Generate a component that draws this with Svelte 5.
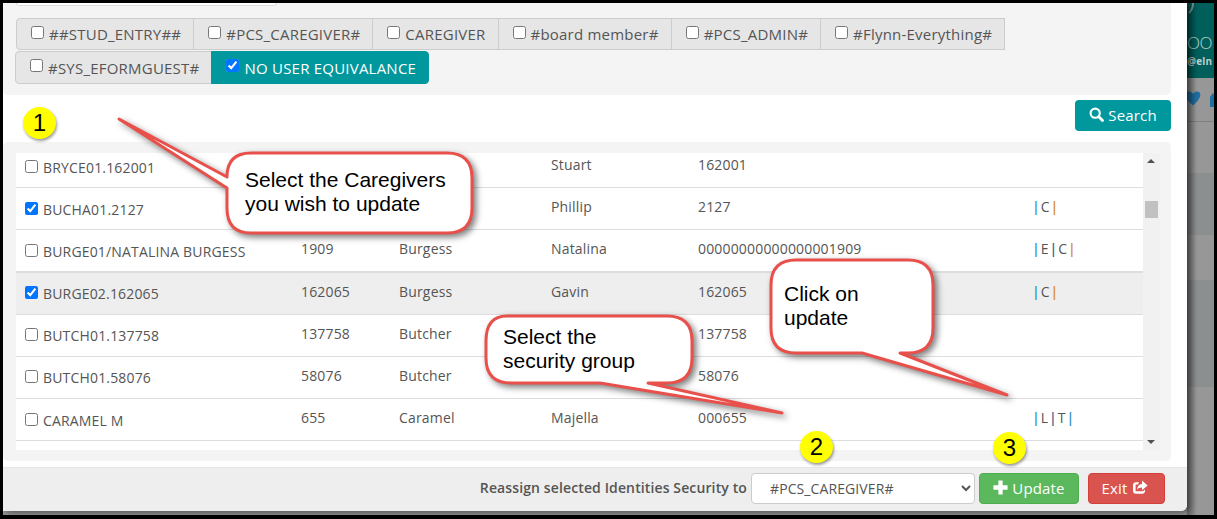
<script>
  const tabsA = [
    { label: '##STUD_ENTRY##' },
    { label: '#PCS_CAREGIVER#' },
    { label: 'CAREGIVER' },
    { label: '#board member#' },
    { label: '#PCS_ADMIN#' },
    { label: '#Flynn-Everything#' }
  ];
  const rows = [
    { id: 'BRYCE01.162001', no: '', last: '', first: 'Stuart', code: '162001', flags: [] },
    { id: 'BUCHA01.2127', no: '', last: '', first: 'Phillip', code: '2127', flags: ['C'], on: true },
    { id: 'BURGE01/NATALINA BURGESS', no: '1909', last: 'Burgess', first: 'Natalina', code: '00000000000000001909', flags: ['E', 'C'] },
    { id: 'BURGE02.162065', no: '162065', last: 'Burgess', first: 'Gavin', code: '162065', flags: ['C'], on: true, hover: true },
    { id: 'BUTCH01.137758', no: '137758', last: 'Butcher', first: '', code: '137758', flags: [] },
    { id: 'BUTCH01.58076', no: '58076', last: 'Butcher', first: '', code: '58076', flags: [] },
    { id: 'CARAMEL M', no: '655', last: 'Caramel', first: 'Majella', code: '000655', flags: ['L', 'T'], blueEnd: true }
  ];
  const badges = [
    { n: 1, x: 23, y: 107 },
    { n: 2, x: 800, y: 431 },
    { n: 3, x: 993, y: 432 }
  ];
</script>

<div class="screen">
  <div class="stage">
    <div class="modal">
      <section class="filters">
        <div class="stub"></div>
        <div class="tabs first">
          {#each tabsA as t}
            <label class="tab"><input type="checkbox" />{t.label}</label>
          {/each}
        </div>
        <div class="tabs second">
          <label class="tab"><input type="checkbox" />#SYS_EFORMGUEST#</label>
          <label class="tab active"><input type="checkbox" checked />NO USER EQUIVALANCE</label>
        </div>
      </section>

      <div class="search-row">
        <button class="btn teal">
          <svg width="15" height="15" viewBox="0 0 16 16"><circle cx="6.6" cy="6.6" r="4.9" fill="none" stroke="#fff" stroke-width="2.3" /><path d="M10.2 10.2 14.4 14.4" stroke="#fff" stroke-width="3" stroke-linecap="round" /></svg>
          Search
        </button>
      </div>

      <section class="results">
        <div class="list">
          <div class="rows">
            {#each rows as r}
              <div class="row" class:hover={r.hover}>
                <label class="name"><input type="checkbox" checked={r.on} />{r.id}</label>
                <span>{r.no}</span>
                <span>{r.last}</span>
                <span>{r.first}</span>
                <span>{r.code}</span>
                <span class="flags">
                  {#if r.flags.length}
                    <i class="blue">|</i>{#each r.flags as f, i}{f}{#if i < r.flags.length - 1}<i class="navy">|</i>{/if}{/each}<i class:blue={r.blueEnd} class:orange={!r.blueEnd}>|</i>
                  {/if}
                </span>
              </div>
            {/each}
            <div class="row"></div>
          </div>
        </div>
        <div class="scrollbar">
          <span class="arrow up"></span>
          <span class="thumb"></span>
          <span class="arrow down"></span>
        </div>
      </section>

      <footer class="foot">
        <span class="foot-label">Reassign selected Identities Security to</span>
        <select class="sel"><option>#PCS_CAREGIVER#</option></select>
        <button class="btn green">
          <svg width="15" height="15" viewBox="0 0 14 14"><path d="M5 0.4h4V5h4.600v4H9v4.600H5V9H0.400V5H5z" fill="#fff" /></svg>
          Update
        </button>
        <button class="btn red">
          Exit
          <svg width="16" height="15" viewBox="0 0 16 15"><path d="M7 2.2H4A3 3 0 0 0 1 5.2v5.6a3 3 0 0 0 3 3h6a3 3 0 0 0 3-3V9.6l-2 1.6v.1H3.6V4.600H6z" fill="#fff" /><path d="M10 .6l5.600 4.800L10 10.200V7.400c-2.400 0-4 .6-4.800 2.600 0-3.600 1.800-5.800 4.800-6z" fill="#fff" /></svg>
        </button>
      </footer>
    </div>

    <aside class="backdrop">
      <div class="bd-head">
        <svg class="bd-arc" width="10" height="12" viewBox="0 0 10 12"><path d="M6 0C6 4 5 7 2 10" fill="none" stroke="#7fa6a2" stroke-width="2" /></svg>
        <span class="bd-oo">OO</span>
        <span class="bd-mail">@eln</span>
      </div>
      <div class="bd-icons">
        <svg width="27" height="44" viewBox="0 0 27 44">
          <path d="M6 27.500 C-4 19 -3 14 -1 14 C2 12.500 5 14 6 16 C7 14 10 12.500 12 14 C15 16 13 22 6 27.500Z" fill="#1f6fa0" />
          <path d="M23 29V19l3-4 2 2v12z" fill="#1f6fa0" />
        </svg>
      </div>
      <div class="band a"></div>
      <div class="band b"></div>
      <div class="band a short"></div>
      <div class="band b tall"></div>
      <div class="band a fill"></div>
    </aside>

    <svg class="callouts" width="1217" height="519" viewBox="0 0 1217 519">
      <g class="bubble">
        <path d="M251 153H447Q472 153 472 178V208Q472 233 447 233H251Q227 233 227 208V188L119 119 227 177Q227 153 251 153Z" />
        <path d="M507 316H667Q692 316 692 341V358Q692 383 667 383H648L782 413 600 383H511Q486 383 486 358V341Q486 316 507 316Z" />
        <path d="M796 260H908Q933 260 933 285V328Q933 353 908 353H900L1007 395 862 353H796Q771 353 771 328V285Q771 260 796 260Z" />
      </g>
      <g class="cap">
        <text x="245" y="187">Select the Caregivers</text>
        <text x="245" y="211">you wish to update</text>
        <text x="503" y="344">Select the</text>
        <text x="503" y="368">security group</text>
        <text x="784" y="301">Click on</text>
        <text x="784" y="325">update</text>
      </g>
    </svg>

    {#each badges as b}
      <span class="badge" style="left:{b.x - 3}px;top:{b.y - 3}px">{b.n}</span>
    {/each}
  </div>
</div>

<style>
  :global(body) { margin: 0; background: #000; }
  * { box-sizing: border-box; }

  .screen {
    width: 1217px;
    height: 519px;
    padding: 3px 3px 4px;
    background: #000;
    font: 14px/20px "Open Sans", sans-serif;
    letter-spacing: .17px;
    color: #555;
    overflow: hidden;
  }
  .stage {
    position: relative;
    display: flex;
    align-items: flex-start;
    height: 512px;
    background: #979797;
    overflow: hidden;
  }
  .modal {
    flex: 0 0 1184px;
    height: 508px;
    display: flex;
    flex-direction: column;
    background: #fff;
    border-bottom-right-radius: 6px;
    box-shadow: 3px 2px 7px rgba(0, 0, 0, .45);
    position: relative;
    z-index: 1;
    overflow: hidden;
  }

  .filters {
    height: 92px;
    margin-right: 16px;
    padding-left: 13px;
    background: #f4f4f4;
    border-bottom-right-radius: 5px;
    border-bottom-left-radius: 5px;
  }
  .stub {
    width: 261px;
    height: 3px;
    background: #fff;
    border: 1px solid #ddd;
    border-top: 0;
    border-radius: 0 0 4px 4px;
  }
  .tabs { display: flex; }
  .tabs.first { margin-top: 12px; }
  .tabs.second { margin-top: 1px; margin-left: -1px; }
  .tab {
    display: flex;
    align-items: center;
    height: 32px;
    padding: 0 12px 0 14px;
    background: #e6e6e6;
    border: 1px solid #ccc;
    margin-left: -1px;
    white-space: nowrap;
    font-size: 15px;
    letter-spacing: .22px;
    color: #555;
  }
  .tabs.second .tab { height: 33px; }
  .tabs .tab:first-child { margin-left: 0; border-radius: 4px 0 0 4px; }
  .tab input { margin: 0 5px 4px 0; width: 13px; height: 13px; }
  .tab.active {
    background: #00979d;
    border-color: #00979d;
    color: #fff;
    border-radius: 0 4px 4px 0;
  }

  .search-row {
    height: 47px;
    margin-right: 16px;
    padding-top: 5px;
    display: flex;
    justify-content: flex-end;
    align-items: flex-start;
  }
  .btn {
    display: inline-flex;
    align-items: center;
    justify-content: center;
    gap: 4px;
    height: 31px;
    border-radius: 4px;
    border: 1px solid transparent;
    color: #fff;
    font: 15px/20px "Open Sans", sans-serif;
    letter-spacing: .17px;
    padding: 0 0 2px;
  }
  .teal { width: 96px; background: #00979d; }
  .green { width: 100px; background: #5cb85c; border-color: #4cae4c; }
  .red { width: 77px; background: #d9534f; border-color: #d43f3a; margin-left: 9px; padding-right: 4px; }

  .results {
    height: 319px;
    margin-right: 16px;
    padding: 11px 11px 11px 13px;
    display: flex;
    background: #f4f4f4;
    border-radius: 5px;
  }
  .list {
    flex: 1;
    background: #fff;
    overflow: hidden;
  }
  .rows { margin-top: -7px; }
  .row {
    display: grid;
    grid-template-columns: 285px 98px 152px 147px 336px 1fr;
    align-items: center;
    height: 42.17px;
    border-bottom: 1px solid #ddd;
    padding-bottom: 3px;
    white-space: nowrap;
  }
  .row.hover { background: #eee; box-shadow: inset 0 1px #ddd; }
  .name {
    display: flex;
    align-items: center;
    padding-left: 9px;
    padding-top: 5px;
  }
  .name input { margin: 0 5px 3px 0; width: 13px; height: 13px; }
  .flags { margin-left: -2px; letter-spacing: 0; }
  .flags i { font-style: normal; font-weight: 600; margin: 0 1px; }
  .flags i:first-child { margin-left: 0; }
  .blue { color: #2f8fc4; }
  .navy { color: #33648f; }
  .orange { color: #d98c20; }

  .scrollbar {
    position: relative;
    width: 17px;
    background: #f1f1f1;
  }
  .arrow {
    position: absolute;
    left: 4px;
    width: 0;
    height: 0;
    border-left: 4px solid transparent;
    border-right: 4px solid transparent;
  }
  .arrow.up { top: 6px; border-bottom: 4px solid #505050; }
  .arrow.down { bottom: 6px; border-top: 4px solid #505050; }
  .thumb {
    position: absolute;
    left: 2px;
    top: 48px;
    width: 13px;
    height: 17px;
    background: #c1c1c1;
  }

  .foot {
    height: 44px;
    margin-top: 6px;
    display: flex;
    align-items: flex-start;
    justify-content: flex-end;
    padding: 5px 22px 0 0;
    background: #eee;
    border-top: 1px solid #e5e5e5;
  }
  .foot-label {
    font-weight: 600;
    letter-spacing: .12px;
    color: #555;
    line-height: 30px;
    margin-right: 4px;
  }
  .sel {
    width: 224px;
    height: 31px;
    margin-right: 4px;
    padding: 0 0 0 14px;
    background: #fff;
    border: 1px solid #ccc;
    border-radius: 4px;
    color: #555;
    font: 14px "Open Sans", sans-serif;
    letter-spacing: .1px;
  }

  .backdrop {
    flex: 1;
    align-self: stretch;
    display: flex;
    flex-direction: column;
    overflow: hidden;
    position: relative;
    color: #b9cfcc;
  }
  .backdrop::after {
    content: "";
    position: absolute;
    inset: 0 auto 0 0;
    width: 10px;
    background: linear-gradient(to right, rgba(0, 0, 0, .32), rgba(0, 0, 0, 0));
  }
  .bd-head {
    position: relative;
    height: 75px;
    flex: none;
    background: #005f5b;
    padding-top: 30px;
    overflow: hidden;
  }
  .bd-arc {
    position: absolute;
    left: 0;
    top: 0;
  }
  .bd-oo {
    display: block;
    font: 300 17px/20px "Open Sans", sans-serif;
    letter-spacing: -.5px;
    white-space: nowrap;
  }
  .bd-mail {
    display: block;
    margin-top: 2px;
    font: 700 10px/12px "Open Sans", sans-serif;
    white-space: nowrap;
  }
  .bd-icons {
    height: 44px;
    flex: none;
    border-bottom: 1px solid #7f7f7f;
    overflow: hidden;
  }
  .bd-icons svg { display: block; }
  .band { flex: none; }
  .band.a { height: 51px; background: #979797; }
  .band.b { height: 62px; background: #8c8f90; }
  .band.short { height: 45px; }
  .band.tall { height: 107px; }
  .band.fill { flex: 1; }

  .callouts {
    position: absolute;
    left: -3px;
    top: -3px;
    z-index: 2;
    pointer-events: none;
  }
  .bubble {
    filter: drop-shadow(3px 3px 3px rgba(0, 0, 0, .5));
  }
  .bubble path {
    fill: #fff;
    stroke: #e8504b;
    stroke-width: 3;
    stroke-linejoin: round;
  }
  .cap text {
    font: 21px "Liberation Sans", Arial, sans-serif;
    letter-spacing: 0;
    fill: #000;
  }
  .badge {
    position: absolute;
    z-index: 3;
    width: 33px;
    height: 32px;
    border-radius: 50%;
    background: #ffff00;
    box-shadow: 1px 2px 3px rgba(0, 0, 0, .4);
    color: #000;
    font: 24px/32px "Liberation Sans", Arial, sans-serif;
    letter-spacing: 0;
    text-align: center;
  }
</style>
